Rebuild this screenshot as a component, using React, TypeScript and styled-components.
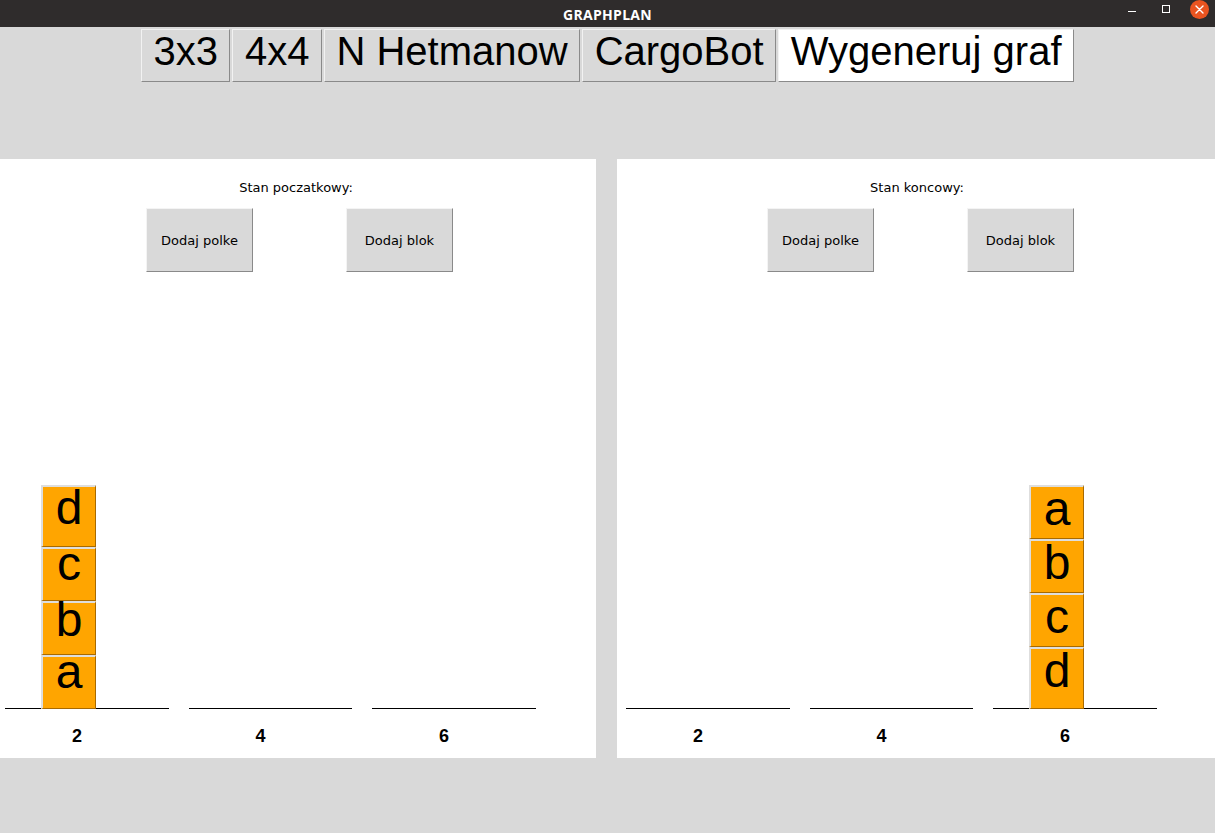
import React from "react";
import styled, { createGlobalStyle } from "styled-components";

const Global = createGlobalStyle`
  html, body { margin: 0; padding: 0; }
  body {
    width: 1215px;
    height: 833px;
    overflow: hidden;
    background: #d9d9d9;
    font-family: "Liberation Sans", Arial, sans-serif;
  }
  * { box-sizing: border-box; }
`;

const Window = styled.div`
  width: 1215px;
  height: 833px;
  background: #d9d9d9;
  display: flex;
  flex-direction: column;
  overflow: hidden;
`;

const TitleBar = styled.div`
  height: 27px;
  flex: 0 0 27px;
  background: #2f2c2c;
  display: grid;
  grid-template-columns: 1fr auto 1fr;
  align-items: center;
`;

const Title = styled.div`
  grid-column: 2;
  color: #ffffff;
  font-family: "Open Sans", "DejaVu Sans", sans-serif;
  font-weight: 700;
  font-size: 14px;
  letter-spacing: 0.3px;
  padding-top: 1px;
`;

const Controls = styled.div`
  grid-column: 3;
  justify-self: end;
  align-self: start;
  display: flex;
  align-items: flex-start;
  padding-right: 6px;
  height: 27px;
`;

const MinBtn = styled.div`
  width: 8px;
  height: 1px;
  background: #ffffff;
  margin-top: 11px;
  margin-right: 26px;
`;

const MaxBtn = styled.div`
  width: 8px;
  height: 8px;
  border: 1px solid #ffffff;
  margin-top: 5px;
  margin-right: 20px;
`;

const CloseBtn = styled.div`
  width: 19px;
  height: 19px;
  border-radius: 50%;
  background: #e95420;
  display: flex;
  align-items: center;
  justify-content: center;
`;

const Toolbar = styled.div`
  display: flex;
  justify-content: center;
  gap: 2px;
  margin-top: 2px;
`;

const TopButton = styled.div<{ $active?: boolean }>`
  height: 53px;
  padding: 0 11.5px;
  border: 1px solid;
  border-color: #f2f2f2 #8a8a8a #8a8a8a #f2f2f2;
  background: ${(p) => (p.$active ? "#ffffff" : "#d9d9d9")};
  color: #000;
  font-family: "Liberation Sans", Arial, sans-serif;
  font-size: 40px;
  line-height: 43px;
  white-space: nowrap;
`;

const PanelRow = styled.div`
  display: flex;
  gap: 21px;
  margin-top: 77px;
  margin-left: -4px;
`;

const Panel = styled.div`
  flex: 0 0 600px;
  width: 600px;
  height: 599px;
  background: #ffffff;
  display: flex;
  flex-direction: column;
`;

const PanelLabel = styled.div`
  padding-top: 21px;
  text-align: center;
  font-family: "DejaVu Sans", sans-serif;
  font-size: 13px;
  line-height: 15px;
  color: #000;
`;

const ActionRow = styled.div`
  display: flex;
  gap: 93px;
  padding-left: 150px;
  margin-top: 13px;
`;

const ActionButton = styled.div`
  width: 107px;
  height: 64px;
  background: #d9d9d9;
  border: 1px solid;
  border-color: #f4f4f4 #8a8a8a #8a8a8a #f4f4f4;
  display: flex;
  align-items: center;
  justify-content: center;
  font-family: "DejaVu Sans", sans-serif;
  font-size: 13px;
  color: #000;
`;

const ShelfRow = styled.div`
  display: flex;
  gap: 20px;
  padding-left: 9px;
`;

const Shelf = styled.div`
  width: 163.5px;
  display: flex;
  flex-direction: column;
`;

const ShelfBase = styled.div`
  height: 437px;
  border-bottom: 1px solid #000;
  display: flex;
  flex-direction: column;
  justify-content: flex-end;
`;

const Stack = styled.div`
  width: 55px;
  margin-left: 36px;
  margin-bottom: -1px;
  display: flex;
  flex-direction: column;
`;

const Block = styled.div<{ $h: number }>`
  height: ${(p) => p.$h}px;
  background: #ffa500;
  border-style: solid;
  border-width: 2px 1px 1px 2px;
  border-color: #dedede #a86a00 #a86a00 #dedede;
  display: flex;
  justify-content: center;
  align-items: flex-start;
  overflow: visible;
`;

const Letter = styled.span<{ $shift: number }>`
  font-family: "Liberation Sans", Arial, sans-serif;
  font-size: 48px;
  line-height: 48px;
  color: #000;
  margin-top: ${(p) => p.$shift}px;
`;

const ShelfLabel = styled.div`
  width: 40px;
  margin-left: 52px;
  margin-top: 17px;
  text-align: center;
  font-family: "Liberation Sans", Arial, sans-serif;
  font-weight: 700;
  font-size: 18px;
  line-height: 20px;
  color: #000;
`;

type BlockData = { l: string; h: number; shift: number };
type PanelData = { title: string; stacks: BlockData[][] };

const panels: PanelData[] = [
  {
    title: "Stan poczatkowy:",
    stacks: [
      [
        { l: "d", h: 62, shift: -3 },
        { l: "c", h: 54, shift: -9 },
        { l: "b", h: 54, shift: -7 },
        { l: "a", h: 54, shift: -9 },
      ],
      [],
      [],
    ],
  },
  {
    title: "Stan koncowy:",
    stacks: [
      [],
      [],
      [
        { l: "a", h: 54, shift: -2 },
        { l: "b", h: 54, shift: -2 },
        { l: "c", h: 54, shift: -2 },
        { l: "d", h: 62, shift: -2 },
      ],
    ],
  },
];

const shelfLabels = ["2", "4", "6"];

export default function App() {
  return (
    <>
      <Global />
      <Window>
        <TitleBar>
          <Title>GRAPHPLAN</Title>
          <Controls>
            <MinBtn />
            <MaxBtn />
            <CloseBtn>
              <svg width="9" height="9" viewBox="0 0 9 9">
                <path d="M1 1 L8 8 M8 1 L1 8" stroke="#ffffff" strokeWidth="1.4" strokeLinecap="round" />
              </svg>
            </CloseBtn>
          </Controls>
        </TitleBar>
        <Toolbar>
          <TopButton>3x3</TopButton>
          <TopButton>4x4</TopButton>
          <TopButton>N Hetmanow</TopButton>
          <TopButton>CargoBot</TopButton>
          <TopButton $active>Wygeneruj graf</TopButton>
        </Toolbar>
        <PanelRow>
          {panels.map((p) => (
            <Panel key={p.title}>
              <PanelLabel>{p.title}</PanelLabel>
              <ActionRow>
                <ActionButton>Dodaj polke</ActionButton>
                <ActionButton>Dodaj blok</ActionButton>
              </ActionRow>
              <ShelfRow>
                {p.stacks.map((stack, i) => (
                  <Shelf key={i}>
                    <ShelfBase>
                      {stack.length > 0 && (
                        <Stack>
                          {stack.map((b) => (
                            <Block key={b.l} $h={b.h}>
                              <Letter $shift={b.shift}>{b.l}</Letter>
                            </Block>
                          ))}
                        </Stack>
                      )}
                    </ShelfBase>
                    <ShelfLabel>{shelfLabels[i]}</ShelfLabel>
                  </Shelf>
                ))}
              </ShelfRow>
            </Panel>
          ))}
        </PanelRow>
      </Window>
    </>
  );
}
